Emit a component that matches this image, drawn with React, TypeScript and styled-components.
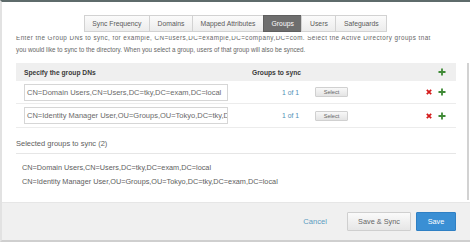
import styled, { createGlobalStyle } from "styled-components";

const GlobalStyle = createGlobalStyle`
  html, body {
    margin: 0;
    padding: 0;
    background: #ffffff;
  }
  body {
    font-family: "Liberation Sans", Arial, sans-serif;
  }
  * {
    box-sizing: border-box;
  }
`;

const Frame = styled.div`
  width: 470px;
  height: 242px;
  display: flex;
  flex-direction: column;
  border-top: 2px solid #5e6b6b;
  border-left: 2px solid #e2e2e2;
  border-bottom: 2px solid #cfcfcf;
  background: #ffffff;
  overflow: hidden;
`;

const TabBar = styled.div`
  height: 34px;
  flex: none;
  display: flex;
  justify-content: center;
  padding: 13px 0 0 0;
  background: #ffffff;
`;

const Tab = styled.div<{ $active?: boolean }>`
  height: 17px;
  line-height: 15px;
  padding: 0 7.6px;
  font-size: 6.8px;
  color: ${(p) => (p.$active ? "#ffffff" : "#5a5a5a")};
  border: 1px solid ${(p) => (p.$active ? "#5f5f5f" : "#d2d2d2")};
  margin-left: -1px;
  background: ${(p) =>
    p.$active
      ? "#6e6e6e"
      : "linear-gradient(#fbfbfb, #ececec)"};
  white-space: nowrap;
`;

const Content = styled.div`
  flex: 1;
  position: relative;
  overflow: hidden;
  padding: 0 14px 0 14px;
`;

const ScrollThumb = styled.div`
  position: absolute;
  right: 1px;
  top: 27px;
  width: 2px;
  height: 137px;
  background: #d2d2d2;
`;

const Description = styled.p`
  margin: -4px 0 0 0;
  font-size: 6.3px;
  line-height: 12px;
  color: #666666;
  white-space: nowrap;
`;

const DescLine = styled.span<{ $spread?: number }>`
  display: block;
  letter-spacing: ${(p) => p.$spread ?? 0}px;
`;

const Table = styled.div`
  margin-top: 7px;
  border-bottom: 1px solid #ececec;
`;

const Row = styled.div<{ $head?: boolean }>`
  display: grid;
  grid-template-columns: 228px 50px 1fr 34px;
  align-items: center;
  height: ${(p) => (p.$head ? "18px" : "23px")};
  padding: 0 0 0 8px;
  background: ${(p) => (p.$head ? "#efefef" : "#ffffff")};
  border-bottom: ${(p) => (p.$head ? "none" : "1px solid #ececec")};
  &:last-child {
    border-bottom: none;
  }
`;

const HeadCell = styled.div`
  font-size: 6.7px;
  font-weight: bold;
  color: #3a3a3a;
  white-space: nowrap;
`;

const DnInput = styled.div`
  width: 204px;
  height: 17px;
  border: 1px solid #d6d6d6;
  padding: 0 0 0 2px;
  font-size: 7.5px;
  line-height: 15px;
  color: #6a6a6a;
  white-space: nowrap;
  overflow: hidden;
`;

const Count = styled.div`
  font-size: 6.8px;
  color: #4f8fb5;
  text-align: right;
  padding-right: 3px;
`;

const SelectButton = styled.div`
  width: 33px;
  height: 10px;
  margin-left: 13px;
  border: 1px solid #d0d0d0;
  border-radius: 1px;
  background: linear-gradient(#f8f8f8, #e4e4e4);
  font-size: 5.6px;
  line-height: 8px;
  text-align: center;
  color: #666666;
`;

const Actions = styled.div`
  display: flex;
  align-items: center;
  justify-content: flex-end;
  gap: 6px;
  padding-right: 10px;
`;

const SelectedTitle = styled.div`
  padding: 10px 0 3px 0;
  font-size: 7.5px;
  line-height: 12px;
  color: #5e5e5e;
  border-bottom: 1px solid #e6e6e6;
`;

const SelectedList = styled.ul`
  list-style: none;
  margin: 0;
  padding: 7px 0 0 6px;
`;

const SelectedItem = styled.li`
  font-size: 7.3px;
  line-height: 14px;
  color: #5e5e5e;
  white-space: nowrap;
`;

const Footer = styled.div`
  height: 38px;
  flex: none;
  display: flex;
  align-items: center;
  justify-content: flex-end;
  padding: 0 14px 0 0;
  background: #f0f0f0;
  border-top: 1px solid #e6e6e6;
`;

const CancelLink = styled.div`
  font-size: 7.6px;
  color: #5b9cc0;
  margin-right: 15px;
`;

const FooterButton = styled.div<{ $primary?: boolean }>`
  height: 19px;
  line-height: 17px;
  margin-left: 5px;
  font-size: 7.3px;
  text-align: center;
  border-radius: 1px;
  border: 1px solid ${(p) => (p.$primary ? "#2f80c4" : "#cfcfcf")};
  color: ${(p) => (p.$primary ? "#ffffff" : "#666666")};
  background: ${(p) =>
    p.$primary ? "#3a8fd4" : "linear-gradient(#fafafa, #e6e6e6)"};
  width: ${(p) => (p.$primary ? "40px" : "64px")};
`;

const PlusIcon = () => (
  <svg width="8" height="8" viewBox="0 0 8 8">
    <path d="M4 0.5V7.5M0.5 4H7.5" stroke="#3f8a36" strokeWidth="1.8" />
  </svg>
);

const RemoveIcon = () => (
  <svg width="6" height="6" viewBox="0 0 6 6">
    <path d="M0.8 0.8L5.2 5.2M5.2 0.8L0.8 5.2" stroke="#d41a1a" strokeWidth="1.7" />
  </svg>
);

const tabs = ["Sync Frequency", "Domains", "Mapped Attributes", "Groups", "Users", "Safeguards"];

const groups = [
  "CN=Domain Users,CN=Users,DC=tky,DC=exam,DC=local",
  "CN=Identity Manager User,OU=Groups,OU=Tokyo,DC=tky,DC=exam,DC=local",
];

export default function App() {
  return (
    <>
      <GlobalStyle />
      <Frame>
        <TabBar>
          {tabs.map((t) => (
            <Tab key={t} $active={t === "Groups"}>
              {t}
            </Tab>
          ))}
        </TabBar>
        <Content>
          <Description>
            <DescLine $spread={0.43}>
              Enter the Group DNs to sync, for example, CN=users,DC=example,DC=company,DC=com. Select the Active Directory groups that
            </DescLine>
            <DescLine>
              you would like to sync to the directory. When you select a group, users of that group will also be synced.
            </DescLine>
          </Description>
          <Table>
            <Row $head>
              <HeadCell>Specify the group DNs</HeadCell>
              <HeadCell>Groups to sync</HeadCell>
              <div />
              <Actions>
                <PlusIcon />
              </Actions>
            </Row>
            {groups.map((g) => (
              <Row key={g}>
                <DnInput>{g}</DnInput>
                <Count>1 of 1</Count>
                <SelectButton>Select</SelectButton>
                <Actions>
                  <RemoveIcon />
                  <PlusIcon />
                </Actions>
              </Row>
            ))}
          </Table>
          <SelectedTitle>Selected groups to sync (2)</SelectedTitle>
          <SelectedList>
            {groups.map((g) => (
              <SelectedItem key={g}>{g}</SelectedItem>
            ))}
          </SelectedList>
          <ScrollThumb />
        </Content>
        <Footer>
          <CancelLink>Cancel</CancelLink>
          <FooterButton>Save &amp; Sync</FooterButton>
          <FooterButton $primary>Save</FooterButton>
        </Footer>
      </Frame>
    </>
  );
}
